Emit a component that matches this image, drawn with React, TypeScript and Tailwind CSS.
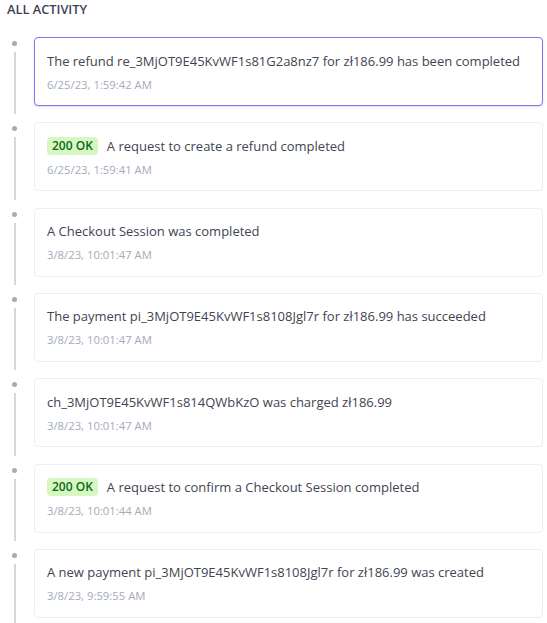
import React from "react"

type Activity = {
  title: string
  date: string
  badge?: string
  active?: boolean
}

const activities: Activity[] = [
  {
    title: "The refund re_3MjOT9E45KvWF1s81G2a8nz7 for zł186.99 has been completed",
    date: "6/25/23, 1:59:42 AM",
    active: true,
  },
  { title: "A request to create a refund completed", date: "6/25/23, 1:59:41 AM", badge: "200 OK" },
  { title: "A Checkout Session was completed", date: "3/8/23, 10:01:47 AM" },
  {
    title: "The payment pi_3MjOT9E45KvWF1s8108Jgl7r for zł186.99 has succeeded",
    date: "3/8/23, 10:01:47 AM",
  },
  { title: "ch_3MjOT9E45KvWF1s814QWbKzO was charged zł186.99", date: "3/8/23, 10:01:47 AM" },
  {
    title: "A request to confirm a Checkout Session completed",
    date: "3/8/23, 10:01:44 AM",
    badge: "200 OK",
  },
  {
    title: "A new payment pi_3MjOT9E45KvWF1s8108Jgl7r for zł186.99 was created",
    date: "3/8/23, 9:59:55 AM",
  },
]

function ActivityItem({ item }: { item: Activity }) {
  return (
    <div className="flex">
      {/* timeline rail */}
      <div className="flex w-[29px] flex-col items-center pt-[4px]">
        <div className="h-[5px] w-[5px] rounded-full bg-[#a3acb9]" />
        <div className="mt-[6px] mb-[8px] w-[2px] flex-1 bg-[#d5d8dd]" />
      </div>

      <div className="ml-[5px] flex-1 pb-[16.33px] pr-[4px]">
        <div
          className={`flex h-[69px] flex-col justify-center rounded-[4px] bg-white pl-[12px] ${
            item.active ? "border-[1.5px] border-[#7b78f0] shadow-sm" : "border border-[#eceef1]"
          }`}
        >
          <div className="flex items-center gap-[9px] text-[13px] leading-[20px] text-[#414552]">
            {item.badge && (
              <span className="rounded-[4px] bg-[#d7f7c2] px-[5px] text-[12px] font-semibold leading-[18px] text-[#0b6a16]">
                {item.badge}
              </span>
            )}
            <span>{item.title}</span>
          </div>
          <div className="mt-[6px] text-[11.3px] leading-[16px] text-[#a3acb9]">{item.date}</div>
        </div>
      </div>
    </div>
  )
}

export default function App() {
  return (
    <div className="min-h-screen bg-white pt-[1px]" style={{ fontFamily: '"Open Sans", "Noto Sans", sans-serif' }}>
      <div className="pl-[7px] text-[12.8px] font-semibold leading-[16px] text-[#3c4257]">ALL ACTIVITY</div>
      <div className="mt-[20px]">
        {activities.map((a) => (
          <ActivityItem key={a.date + a.title} item={a} />
        ))}
      </div>
    </div>
  )
}
